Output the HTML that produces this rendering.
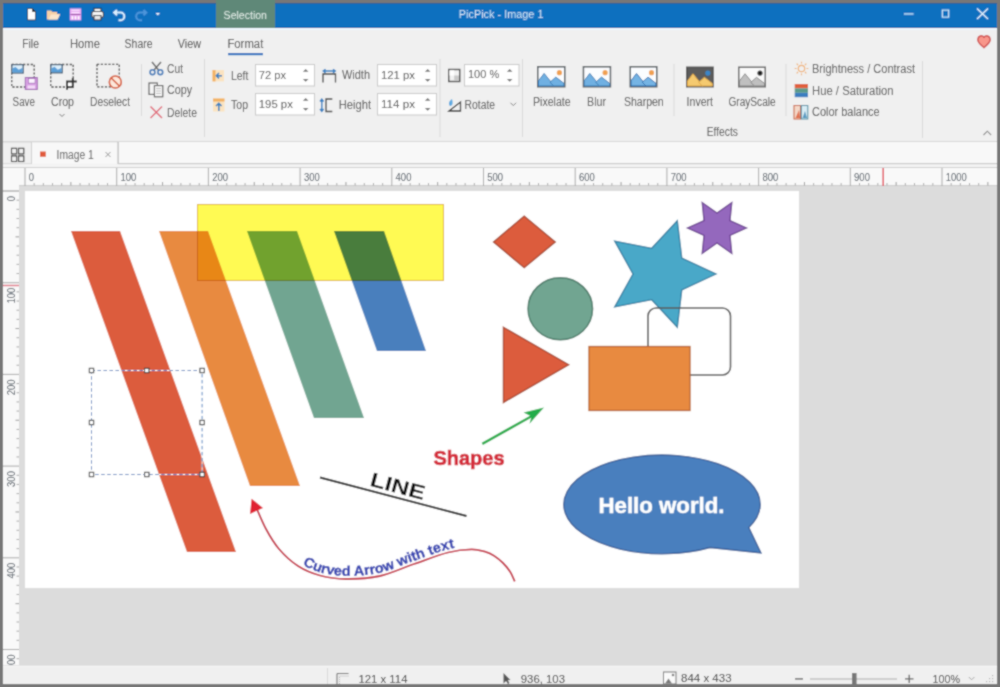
<!DOCTYPE html>
<html><head><meta charset="utf-8">
<style>
html,body{margin:0;padding:0;width:1000px;height:687px;overflow:hidden;background:#777;}
svg{display:block;font-family:"Liberation Sans",sans-serif;}
.ui{fill:#444;font-size:11px;}
</style></head><body><div id="wrap">
<svg width="1000" height="687" viewBox="0 0 1000 687">
<defs><filter id="soft" x="0" y="0" width="1000" height="687" filterUnits="userSpaceOnUse"><feConvolveMatrix order="3" kernelMatrix="1 2 1 2 8 2 1 2 1" divisor="20" edgeMode="duplicate" preserveAlpha="true"/></filter></defs>
<g filter="url(#soft)">
<!-- outer frame -->
<rect x="0" y="0" width="1000" height="687" fill="#777777"/>
<!-- title bar -->
<rect x="3" y="3" width="994" height="25" fill="#106fbf"/><rect x="3" y="3" width="994" height="0.8" fill="#2a5c92"/><rect x="3" y="27" width="994" height="1" fill="#165fa6"/>
<rect x="216" y="0" width="59" height="28" fill="#5e8878"/>
<!-- title icons -->
<g>
<path d="M27.5,8.5 H32.5 L35.5,11.5 V20 H27.5 Z" fill="#fdfdfd" stroke="#1a2a3a" stroke-width="0.8"/>
<path d="M32.5,8.5 V11.5 H35.5" fill="#333" stroke="#222" stroke-width="0.8"/>
<path d="M47,19.5 V10.5 H51 L52.5,12 H57 V14 H60 L57.5,19.5 Z" fill="#f6d0a6"/>
<path d="M48.5,19.5 L51,14.5 H60 L57.5,19.5 Z" fill="#fbe6cc"/>
<rect x="69.8" y="8.4" width="11.4" height="12" fill="#e9a6f2"/>
<rect x="71.5" y="9.6" width="8" height="1.2" fill="#fbe6ff"/>
<rect x="71.5" y="12" width="8" height="1.2" fill="#fbe6ff"/>
<rect x="70.5" y="14" width="10" height="0.9" fill="#8a4a92"/>
<rect x="71.6" y="16.2" width="1.6" height="3.2" fill="#fff"/>
<rect x="74.7" y="16.2" width="1.6" height="3.2" fill="#fff"/>
<rect x="77.8" y="16.2" width="1.6" height="3.2" fill="#fff"/>
<rect x="94" y="8.3" width="7" height="3.5" fill="#f4f4f4" stroke="#1d2530" stroke-width="0.9"/>
<rect x="91.8" y="11.5" width="11.6" height="6" rx="1.5" fill="#f4f4f4" stroke="#1d2530" stroke-width="1"/>
<rect x="94" y="15.5" width="7" height="4.5" fill="#e8e8e8" stroke="#1d2530" stroke-width="0.9"/>
<path d="M117,10 L114.2,12.6 L117,15.2 M114.5,12.6 H120.5 A3.8,3.8 0 0 1 120.5,20.2 H118.5" fill="none" stroke="#dcefff" stroke-width="2"/>
<path d="M143.5,10 L146.3,12.6 L143.5,15.2 M146,12.6 H140 A3.8,3.8 0 0 0 140,20.2 H142" fill="none" stroke="#4e95da" stroke-width="2"/>
<path d="M155.6,13 H160 L157.8,15.6 Z" fill="#e8f2fc"/>
<text x="223.6" y="19.2" font-size="11.5" fill="#e6f0ea" textLength="43.4" lengthAdjust="spacingAndGlyphs">Selection</text>
<text x="458.8" y="17.6" font-size="11.5" fill="#d6e8f8" textLength="84.7" lengthAdjust="spacingAndGlyphs">PicPick - Image 1</text>
<rect x="904" y="13.3" width="9.6" height="1.3" fill="#d8ecfc"/>
<rect x="942.3" y="10.1" width="6.4" height="7" fill="none" stroke="#d8ecfc" stroke-width="1.2"/>
<path d="M977,8.6 L988,19 M988,8.6 L977,19" stroke="#e4f1fd" stroke-width="1.4"/>
</g>
<!-- ribbon -->
<rect x="3" y="28" width="994" height="113" fill="#f0f0f0"/>
<rect x="3" y="28" width="994" height="2" fill="#eef6fe"/>
<rect x="3" y="141" width="994" height="1" fill="#dadada"/>
<!-- tab strip -->
<!-- ribbon text -->
<g fill="#444" font-size="12">
<text x="22.2" y="48.1" textLength="16.8" lengthAdjust="spacingAndGlyphs">File</text>
<text x="70" y="48.1" textLength="30" lengthAdjust="spacingAndGlyphs">Home</text>
<text x="124.6" y="48.1" textLength="28" lengthAdjust="spacingAndGlyphs">Share</text>
<text x="177.8" y="48.1" textLength="23.2" lengthAdjust="spacingAndGlyphs">View</text>
<text x="227.4" y="48.1" textLength="35.9" lengthAdjust="spacingAndGlyphs">Format</text>
</g>
<rect x="228" y="53" width="35" height="2.2" fill="#106fbf"/>
<g fill="#4c4c4c" font-size="12">
<text x="12.6" y="106" textLength="22.4" lengthAdjust="spacingAndGlyphs">Save</text>
<text x="51" y="106" textLength="23" lengthAdjust="spacingAndGlyphs">Crop</text>
<text x="90" y="106" textLength="40" lengthAdjust="spacingAndGlyphs">Deselect</text>
<text x="167" y="72.5" textLength="16" lengthAdjust="spacingAndGlyphs">Cut</text>
<text x="167" y="94.2" textLength="25" lengthAdjust="spacingAndGlyphs">Copy</text>
<text x="167" y="116.6" textLength="30" lengthAdjust="spacingAndGlyphs">Delete</text>
<text x="231" y="80" textLength="17.4" lengthAdjust="spacingAndGlyphs">Left</text>
<text x="231" y="108.9" textLength="17" lengthAdjust="spacingAndGlyphs">Top</text>
<text x="342" y="79.4" textLength="28" lengthAdjust="spacingAndGlyphs">Width</text>
<text x="338.7" y="108.5" textLength="32.3" lengthAdjust="spacingAndGlyphs">Height</text>
<text x="464.6" y="108.5" textLength="30.4" lengthAdjust="spacingAndGlyphs">Rotate</text>
<text x="533" y="106" textLength="37.7" lengthAdjust="spacingAndGlyphs">Pixelate</text>
<text x="587" y="106" textLength="19" lengthAdjust="spacingAndGlyphs">Blur</text>
<text x="624" y="106" textLength="39.7" lengthAdjust="spacingAndGlyphs">Sharpen</text>
<text x="686.6" y="106" textLength="26.4" lengthAdjust="spacingAndGlyphs">Invert</text>
<text x="728.4" y="106" textLength="47.3" lengthAdjust="spacingAndGlyphs">GrayScale</text>
<text x="706.8" y="136" textLength="31.1" lengthAdjust="spacingAndGlyphs">Effects</text>
<text x="812" y="73.3" textLength="103" lengthAdjust="spacingAndGlyphs">Brightness / Contrast</text>
<text x="812" y="95.3" textLength="81.6" lengthAdjust="spacingAndGlyphs">Hue / Saturation</text>
<text x="812" y="116.3" textLength="67.6" lengthAdjust="spacingAndGlyphs">Color balance</text>
</g>
<!-- inputs -->
<g fill="#fff" stroke="#c8c8c8" stroke-width="1">
<rect x="255.5" y="64.5" width="59" height="21.5"/>
<rect x="255.5" y="93.5" width="59" height="21.5"/>
<rect x="377.5" y="64.5" width="59" height="21.5"/>
<rect x="377.5" y="93.5" width="59" height="21.5"/>
<rect x="464.5" y="64.5" width="54.5" height="21.5"/>
</g>
<g fill="#4c4c4c" font-size="12">
<text x="258.8" y="79" font-size="11.5" textLength="27.2" lengthAdjust="spacingAndGlyphs">72 px</text>
<text x="258.8" y="108" font-size="11.5" textLength="34" lengthAdjust="spacingAndGlyphs">195 px</text>
<text x="381" y="79" font-size="11.5" textLength="34" lengthAdjust="spacingAndGlyphs">121 px</text>
<text x="381" y="108" font-size="11.5" textLength="34" lengthAdjust="spacingAndGlyphs">114 px</text>
<text x="468" y="78" font-size="11" textLength="31.2" lengthAdjust="spacingAndGlyphs">100 %</text>
</g>
<!-- ribbon icons -->
<g>
<rect x="11.7" y="64.5" width="22.5" height="22.5" fill="none" stroke="#3a3a3a" stroke-width="1.3" stroke-dasharray="2.2,1.6"/>
<rect x="11.799999999999999" y="64.6" width="11.4" height="8.4" fill="#dff0fc" stroke="#2b4a66" stroke-width="1.2"/><polygon points="12.399999999999999,72.39999999999999 12.399999999999999,68.32 15.61,66.88 18.759999999999998,69.76 22.599999999999998,67.84 22.599999999999998,72.39999999999999" fill="#5a9fd8"/>
<rect x="25.3" y="77.5" width="12" height="12" fill="#d9a2e4" stroke="#9a62ae" stroke-width="1"/>
<rect x="28.3" y="78.6" width="6.8" height="4.6" fill="#fcf4ff" stroke="#9a62ae" stroke-width="0.7"/>
<rect x="27.5" y="85.5" width="7.5" height="3" fill="#f4dcf8"/>
<rect x="50.7" y="64.5" width="22.5" height="22.5" fill="none" stroke="#3a3a3a" stroke-width="1.3" stroke-dasharray="2.2,1.6"/>
<rect x="50.800000000000004" y="64.6" width="11.4" height="8.200000000000001" fill="#dff0fc" stroke="#2b4a66" stroke-width="1.2"/><polygon points="51.400000000000006,72.2 51.400000000000006,68.23 54.61,66.82 57.760000000000005,69.64 61.6,67.76 61.6,72.2" fill="#5a9fd8"/>
<rect x="67" y="81.5" width="5.8" height="5.6" fill="#fff" stroke="#2a2a2a" stroke-width="2"/>
<path d="M72.8,78 V81.5 H76.8 M67,87.1 V89.8" fill="none" stroke="#2a2a2a" stroke-width="2"/>
<rect x="97" y="64.3" width="22.3" height="22.5" fill="none" stroke="#3a3a3a" stroke-width="1.3" stroke-dasharray="2.2,1.6"/>
<circle cx="115.3" cy="82" r="6" fill="#fde8dc" stroke="#d55a38" stroke-width="1.6"/>
<path d="M111.2,78 L119.4,86" stroke="#d55a38" stroke-width="1.6"/>
<path d="M152,62 L158.5,70 M161,62 L154,70" stroke="#6a6a6a" stroke-width="1.6"/>
<circle cx="152.5" cy="72.2" r="2.4" fill="none" stroke="#3d78b8" stroke-width="1.6"/>
<circle cx="160.3" cy="72.2" r="2.4" fill="none" stroke="#3d78b8" stroke-width="1.6"/>
<rect x="149" y="83" width="8.3" height="11.4" fill="#f6f6f6" stroke="#555" stroke-width="1.1"/>
<rect x="154.4" y="85.6" width="8.4" height="11.2" fill="#f6f6f6" stroke="#555" stroke-width="1.1"/>
<path d="M156,88.5 H161 M156,91 H161 M156,93.5 H161" stroke="#aaa" stroke-width="0.7"/>
<path d="M150.5,106.5 L162,118 M162,106.5 L150.5,118" stroke="#e06a78" stroke-width="1.5"/>
<rect x="212.5" y="70" width="11.5" height="11.4" fill="#fbe3c0"/>
<rect x="212.5" y="70" width="3" height="11.4" fill="#f2b060"/>
<path d="M222,75.7 H216.5 M219,73 L216.3,75.7 L219,78.4" fill="none" stroke="#2d7cc0" stroke-width="1.5"/>
<rect x="213" y="98.5" width="11.5" height="13" fill="#fbe3c0"/>
<rect x="213" y="98.5" width="11.5" height="3" fill="#f2b060"/>
<path d="M218.8,111 V103.5 M216,106 L218.8,103.2 L221.6,106" fill="none" stroke="#2d7cc0" stroke-width="1.5"/>
<path d="M323,82.5 V74 H335.5 V82.5" fill="none" stroke="#404040" stroke-width="1.3"/>
<path d="M323.5,71 H335 M325.5,69.2 L323.2,71 L325.5,72.8 M333,69.2 L335.3,71 L333,72.8" fill="none" stroke="#2d7cc0" stroke-width="1.4"/>
<path d="M332.3,99 H326 V111.5 H332.3" fill="none" stroke="#404040" stroke-width="1.3"/>
<path d="M321.8,99.5 V111 M320,101.5 L321.8,99.2 L323.6,101.5 M320,109 L321.8,111.3 L323.6,109" fill="none" stroke="#2d7cc0" stroke-width="1.4"/>
<rect x="448.7" y="69.5" width="11" height="12" fill="#f2f2f2" stroke="#404040" stroke-width="1.4"/>
<rect x="449.5" y="70.3" width="4.7" height="5.2" fill="#ffffff"/>
<rect x="454.2" y="75.5" width="4.7" height="5.3" fill="#c8c8c8"/>
<path d="M449,111 L460.5,102 V111 Z" fill="none" stroke="#333" stroke-width="1.3"/>
<path d="M452,99 C449,101 448,104 450,106 C452,106 453.5,104 452,99 Z" fill="#5aa8e0"/>
<path d="M510.5,102.8 L513.3,105.6 L516.1,102.8" fill="none" stroke="#777" stroke-width="1"/>
<path d="M59.5,114 L62,116.5 L64.5,114" fill="none" stroke="#777" stroke-width="1"/>
<rect x="537.75" y="66.75" width="27.0" height="20.0" fill="#fbfdff" stroke="#555c60" stroke-width="1.5"/><polygon points="538.5,86.0 538.5,80.82 544.11,73.42 554.31,86.0 " fill="#6fb0e2" stroke="#3d7fb8" stroke-width="1"/><polygon points="549.975,82.3 555.84,77.12 564.0,83.41 564.0,86.0 553.8,86.0" fill="#6fb0e2" stroke="#3d7fb8" stroke-width="1"/><circle cx="559.41" cy="72.68" r="2.6" fill="#f0a050"/><rect x="583.45" y="66.75" width="27.0" height="20.0" fill="#fbfdff" stroke="#555c60" stroke-width="1.5"/><polygon points="584.2,86.0 584.2,80.82 589.8100000000001,73.42 600.01,86.0 " fill="#6fb0e2" stroke="#3d7fb8" stroke-width="1"/><polygon points="595.6750000000001,82.3 601.5400000000001,77.12 609.7,83.41 609.7,86.0 599.5,86.0" fill="#6fb0e2" stroke="#3d7fb8" stroke-width="1"/><circle cx="605.11" cy="72.68" r="2.6" fill="#f0a050"/><rect x="630.25" y="66.75" width="26.5" height="20.0" fill="#fbfdff" stroke="#555c60" stroke-width="1.5"/><polygon points="631.0,86.0 631.0,80.82 636.5,73.42 646.5,86.0 " fill="#74b4e4" stroke="#2f6fb0" stroke-width="1"/><polygon points="642.25,82.3 648.0,77.12 656.0,83.41 656.0,86.0 646.0,86.0" fill="#74b4e4" stroke="#2f6fb0" stroke-width="1"/><circle cx="651.5" cy="72.68" r="2.6" fill="#f0a050"/><rect x="686.75" y="67.25" width="26.3" height="19.5" fill="#5c5c5c" stroke="#505050" stroke-width="1.5"/><polygon points="687.5,86.0 687.5,80.96 692.956,73.76 702.876,86.0 " fill="#f5ca70" stroke="#e0a848" stroke-width="1"/><polygon points="698.66,82.4 704.364,77.36 712.3,83.48 712.3,86.0 702.38,86.0" fill="#f5ca70" stroke="#e0a848" stroke-width="1"/><circle cx="707.836" cy="73.04" r="2.6" fill="#3a86c8"/><rect x="738.75" y="67.25" width="26.5" height="19.5" fill="#fafafa" stroke="#666" stroke-width="1.5"/><polygon points="739.5,86.0 739.5,80.96 745.0,73.76 755.0,86.0 " fill="#c0c0c0" stroke="#888" stroke-width="1"/><polygon points="750.75,82.4 756.5,77.36 764.5,83.48 764.5,86.0 754.5,86.0" fill="#c0c0c0" stroke="#888" stroke-width="1"/><circle cx="760.0" cy="73.04" r="2.6" fill="#222"/>
<circle cx="801.5" cy="68.5" r="3.2" fill="none" stroke="#f0b070" stroke-width="1.2"/>
<path d="M801.5,61.7 V63.5 M801.5,73.5 V75.3 M794.7,68.5 H796.5 M806.5,68.5 H808.3 M796.7,63.7 L798,65 M805,72 L806.3,73.3 M796.7,73.3 L798,72 M805,65 L806.3,63.7" stroke="#f0b070" stroke-width="1.1"/>
<rect x="794.7" y="84" width="13.3" height="4.4" fill="#e0603c"/>
<rect x="794.7" y="88.4" width="13.3" height="4.4" fill="#5a9a8a"/>
<rect x="794.7" y="92.8" width="13.3" height="4.4" fill="#3a7ec0"/>
<rect x="794" y="105.5" width="6.5" height="13.5" fill="#f4d8c8" stroke="#c86040" stroke-width="1"/>
<rect x="801.3" y="105.5" width="6.5" height="13.5" fill="#d8ecf4" stroke="#4a8aa0" stroke-width="1"/>
<path d="M795.5,118 L799,110 L800,118 Z" fill="#e07050"/>
<path d="M802.5,118 L805,111 L807,118 Z" fill="#5a9ac0"/>
<path d="M983.5,135 L987.3,131.2 L991.1,135" fill="none" stroke="#888" stroke-width="1.1"/>
<path d="M984,37.2 C982,35 978.2,35.5 977.8,39.3 C977.5,42.5 980.8,45 984,47.6 C987.2,45 990.5,42.5 990.2,39.3 C989.8,35.5 986,35 984,37.2 Z" fill="#f8968a" stroke="#cf4e4e" stroke-width="1.5"/>
</g>
<!-- separators -->
<g fill="#d8d8d8">
<rect x="141" y="64" width="1" height="52"/>
<rect x="204" y="59" width="1" height="78"/>
<rect x="439.5" y="59" width="1" height="78"/>
<rect x="522" y="59" width="1" height="78"/>
<rect x="673.5" y="64" width="1" height="52"/>
<rect x="785.5" y="64" width="1" height="52"/>
<rect x="922" y="61" width="1" height="77"/>
</g>
<!-- spinners -->
<g fill="#707070">
<path d="M302.9,71.7 L305.7,68.9 L308.5,71.7 Z M302.9,78.9 L305.7,81.7 L308.5,78.9 Z"/>
<path d="M302.9,100.7 L305.7,97.9 L308.5,100.7 Z M302.9,107.9 L305.7,110.7 L308.5,107.9 Z"/>
<path d="M424.9,71.7 L427.7,68.9 L430.5,71.7 Z M424.9,78.9 L427.7,81.7 L430.5,78.9 Z"/>
<path d="M424.9,100.7 L427.7,97.9 L430.5,100.7 Z M424.9,107.9 L427.7,110.7 L430.5,107.9 Z"/>
<path d="M506.9,71.7 L509.7,68.9 L512.5,71.7 Z M506.9,78.9 L509.7,81.7 L512.5,78.9 Z"/>
</g>
<!-- tabstrip -->
<rect x="3" y="142" width="994" height="26" fill="#f0f0f0"/>
<!-- rulers -->
<rect x="3" y="168" width="994" height="18" fill="#f9f9f9"/>
<rect x="3" y="185" width="16" height="480" fill="#f9f9f9"/>
<!-- tab strip content -->
<rect x="3" y="142" width="994" height="26" fill="#f0f0f0"/>
<rect x="3" y="141.5" width="994" height="1" fill="#d4d4d4"/>
<rect x="118" y="142" width="879" height="22" fill="#f8f8f8"/>
<rect x="31.5" y="142.5" width="86.5" height="21.5" fill="#f8f8f8"/>
<rect x="31" y="142" width="1" height="22" fill="#d0d0d0"/>
<rect x="117.5" y="142" width="1.2" height="22" fill="#b8b8b8"/>
<rect x="118" y="163.2" width="879" height="1.2" fill="#c0c0c0"/>
<rect x="3" y="163.2" width="28" height="1" fill="#d8d8d8"/>
<rect x="3" y="164.4" width="994" height="3.2" fill="#f4f4f4"/>
<rect x="3" y="167.2" width="994" height="1" fill="#c8c8c8"/>
<g fill="none" stroke="#333" stroke-width="1.1">
<rect x="11.5" y="148.3" width="5.2" height="5.6"/><rect x="18.6" y="148.3" width="5.2" height="5.6"/>
<rect x="11.5" y="155.9" width="5.2" height="5.6"/><rect x="18.6" y="155.9" width="5.2" height="5.6"/>
</g>
<rect x="40" y="151.5" width="5.8" height="5.3" fill="#e05a3a"/>
<text x="56.6" y="159.2" font-size="12" fill="#555" textLength="37.2" lengthAdjust="spacingAndGlyphs">Image 1</text>
<path d="M105.5,152 L110.5,157 M110.5,152 L105.5,157" stroke="#888" stroke-width="0.9"/>
<!-- rulers -->
<rect x="3" y="168" width="994" height="17" fill="#f9f9f9"/>
<rect x="3" y="185" width="994" height="1.6" fill="#cdcdcd"/>
<rect x="3" y="186" width="16" height="479" fill="#f9f9f9"/>
<rect x="19" y="186" width="1" height="479" fill="#d0d0d0"/>
<rect x="3" y="190.5" width="16" height="1" fill="#c8c8c8"/>
<rect x="24.50" y="168" width="1" height="18" fill="#a8a8a8"/><rect x="33.67" y="183" width="1" height="2.5" fill="#a8a8a8"/><rect x="42.84" y="183" width="1" height="2.5" fill="#a8a8a8"/><rect x="52.01" y="183" width="1" height="2.5" fill="#a8a8a8"/><rect x="61.18" y="183" width="1" height="2.5" fill="#a8a8a8"/><rect x="70.35" y="182" width="1" height="3.5" fill="#999"/><rect x="79.52" y="183" width="1" height="2.5" fill="#a8a8a8"/><rect x="88.69" y="183" width="1" height="2.5" fill="#a8a8a8"/><rect x="97.86" y="183" width="1" height="2.5" fill="#a8a8a8"/><rect x="107.03" y="183" width="1" height="2.5" fill="#a8a8a8"/><rect x="116.20" y="168" width="1" height="18" fill="#a8a8a8"/><rect x="125.37" y="183" width="1" height="2.5" fill="#a8a8a8"/><rect x="134.54" y="183" width="1" height="2.5" fill="#a8a8a8"/><rect x="143.71" y="183" width="1" height="2.5" fill="#a8a8a8"/><rect x="152.88" y="183" width="1" height="2.5" fill="#a8a8a8"/><rect x="162.05" y="182" width="1" height="3.5" fill="#999"/><rect x="171.22" y="183" width="1" height="2.5" fill="#a8a8a8"/><rect x="180.39" y="183" width="1" height="2.5" fill="#a8a8a8"/><rect x="189.56" y="183" width="1" height="2.5" fill="#a8a8a8"/><rect x="198.73" y="183" width="1" height="2.5" fill="#a8a8a8"/><rect x="207.90" y="168" width="1" height="18" fill="#a8a8a8"/><rect x="217.07" y="183" width="1" height="2.5" fill="#a8a8a8"/><rect x="226.24" y="183" width="1" height="2.5" fill="#a8a8a8"/><rect x="235.41" y="183" width="1" height="2.5" fill="#a8a8a8"/><rect x="244.58" y="183" width="1" height="2.5" fill="#a8a8a8"/><rect x="253.75" y="182" width="1" height="3.5" fill="#999"/><rect x="262.92" y="183" width="1" height="2.5" fill="#a8a8a8"/><rect x="272.09" y="183" width="1" height="2.5" fill="#a8a8a8"/><rect x="281.26" y="183" width="1" height="2.5" fill="#a8a8a8"/><rect x="290.43" y="183" width="1" height="2.5" fill="#a8a8a8"/><rect x="299.60" y="168" width="1" height="18" fill="#a8a8a8"/><rect x="308.77" y="183" width="1" height="2.5" fill="#a8a8a8"/><rect x="317.94" y="183" width="1" height="2.5" fill="#a8a8a8"/><rect x="327.11" y="183" width="1" height="2.5" fill="#a8a8a8"/><rect x="336.28" y="183" width="1" height="2.5" fill="#a8a8a8"/><rect x="345.45" y="182" width="1" height="3.5" fill="#999"/><rect x="354.62" y="183" width="1" height="2.5" fill="#a8a8a8"/><rect x="363.79" y="183" width="1" height="2.5" fill="#a8a8a8"/><rect x="372.96" y="183" width="1" height="2.5" fill="#a8a8a8"/><rect x="382.13" y="183" width="1" height="2.5" fill="#a8a8a8"/><rect x="391.30" y="168" width="1" height="18" fill="#a8a8a8"/><rect x="400.47" y="183" width="1" height="2.5" fill="#a8a8a8"/><rect x="409.64" y="183" width="1" height="2.5" fill="#a8a8a8"/><rect x="418.81" y="183" width="1" height="2.5" fill="#a8a8a8"/><rect x="427.98" y="183" width="1" height="2.5" fill="#a8a8a8"/><rect x="437.15" y="182" width="1" height="3.5" fill="#999"/><rect x="446.32" y="183" width="1" height="2.5" fill="#a8a8a8"/><rect x="455.49" y="183" width="1" height="2.5" fill="#a8a8a8"/><rect x="464.66" y="183" width="1" height="2.5" fill="#a8a8a8"/><rect x="473.83" y="183" width="1" height="2.5" fill="#a8a8a8"/><rect x="483.00" y="168" width="1" height="18" fill="#a8a8a8"/><rect x="492.17" y="183" width="1" height="2.5" fill="#a8a8a8"/><rect x="501.34" y="183" width="1" height="2.5" fill="#a8a8a8"/><rect x="510.51" y="183" width="1" height="2.5" fill="#a8a8a8"/><rect x="519.68" y="183" width="1" height="2.5" fill="#a8a8a8"/><rect x="528.85" y="182" width="1" height="3.5" fill="#999"/><rect x="538.02" y="183" width="1" height="2.5" fill="#a8a8a8"/><rect x="547.19" y="183" width="1" height="2.5" fill="#a8a8a8"/><rect x="556.36" y="183" width="1" height="2.5" fill="#a8a8a8"/><rect x="565.53" y="183" width="1" height="2.5" fill="#a8a8a8"/><rect x="574.70" y="168" width="1" height="18" fill="#a8a8a8"/><rect x="583.87" y="183" width="1" height="2.5" fill="#a8a8a8"/><rect x="593.04" y="183" width="1" height="2.5" fill="#a8a8a8"/><rect x="602.21" y="183" width="1" height="2.5" fill="#a8a8a8"/><rect x="611.38" y="183" width="1" height="2.5" fill="#a8a8a8"/><rect x="620.55" y="182" width="1" height="3.5" fill="#999"/><rect x="629.72" y="183" width="1" height="2.5" fill="#a8a8a8"/><rect x="638.89" y="183" width="1" height="2.5" fill="#a8a8a8"/><rect x="648.06" y="183" width="1" height="2.5" fill="#a8a8a8"/><rect x="657.23" y="183" width="1" height="2.5" fill="#a8a8a8"/><rect x="666.40" y="168" width="1" height="18" fill="#a8a8a8"/><rect x="675.57" y="183" width="1" height="2.5" fill="#a8a8a8"/><rect x="684.74" y="183" width="1" height="2.5" fill="#a8a8a8"/><rect x="693.91" y="183" width="1" height="2.5" fill="#a8a8a8"/><rect x="703.08" y="183" width="1" height="2.5" fill="#a8a8a8"/><rect x="712.25" y="182" width="1" height="3.5" fill="#999"/><rect x="721.42" y="183" width="1" height="2.5" fill="#a8a8a8"/><rect x="730.59" y="183" width="1" height="2.5" fill="#a8a8a8"/><rect x="739.76" y="183" width="1" height="2.5" fill="#a8a8a8"/><rect x="748.93" y="183" width="1" height="2.5" fill="#a8a8a8"/><rect x="758.10" y="168" width="1" height="18" fill="#a8a8a8"/><rect x="767.27" y="183" width="1" height="2.5" fill="#a8a8a8"/><rect x="776.44" y="183" width="1" height="2.5" fill="#a8a8a8"/><rect x="785.61" y="183" width="1" height="2.5" fill="#a8a8a8"/><rect x="794.78" y="183" width="1" height="2.5" fill="#a8a8a8"/><rect x="803.95" y="182" width="1" height="3.5" fill="#999"/><rect x="813.12" y="183" width="1" height="2.5" fill="#a8a8a8"/><rect x="822.29" y="183" width="1" height="2.5" fill="#a8a8a8"/><rect x="831.46" y="183" width="1" height="2.5" fill="#a8a8a8"/><rect x="840.63" y="183" width="1" height="2.5" fill="#a8a8a8"/><rect x="849.80" y="168" width="1" height="18" fill="#a8a8a8"/><rect x="858.97" y="183" width="1" height="2.5" fill="#a8a8a8"/><rect x="868.14" y="183" width="1" height="2.5" fill="#a8a8a8"/><rect x="877.31" y="183" width="1" height="2.5" fill="#a8a8a8"/><rect x="886.48" y="183" width="1" height="2.5" fill="#a8a8a8"/><rect x="895.65" y="182" width="1" height="3.5" fill="#999"/><rect x="904.82" y="183" width="1" height="2.5" fill="#a8a8a8"/><rect x="913.99" y="183" width="1" height="2.5" fill="#a8a8a8"/><rect x="923.16" y="183" width="1" height="2.5" fill="#a8a8a8"/><rect x="932.33" y="183" width="1" height="2.5" fill="#a8a8a8"/><rect x="941.50" y="168" width="1" height="18" fill="#a8a8a8"/><rect x="950.67" y="183" width="1" height="2.5" fill="#a8a8a8"/><rect x="959.84" y="183" width="1" height="2.5" fill="#a8a8a8"/><rect x="969.01" y="183" width="1" height="2.5" fill="#a8a8a8"/><rect x="978.18" y="183" width="1" height="2.5" fill="#a8a8a8"/><rect x="987.35" y="182" width="1" height="3.5" fill="#999"/><g font-size="10.5" fill="#46505a"><text x="28.80" y="180.8" textLength="5.27" lengthAdjust="spacingAndGlyphs">0</text><text x="120.50" y="180.8" textLength="15.81" lengthAdjust="spacingAndGlyphs">100</text><text x="212.20" y="180.8" textLength="15.81" lengthAdjust="spacingAndGlyphs">200</text><text x="303.90" y="180.8" textLength="15.81" lengthAdjust="spacingAndGlyphs">300</text><text x="395.60" y="180.8" textLength="15.81" lengthAdjust="spacingAndGlyphs">400</text><text x="487.30" y="180.8" textLength="15.81" lengthAdjust="spacingAndGlyphs">500</text><text x="579.00" y="180.8" textLength="15.81" lengthAdjust="spacingAndGlyphs">600</text><text x="670.70" y="180.8" textLength="15.81" lengthAdjust="spacingAndGlyphs">700</text><text x="762.40" y="180.8" textLength="15.81" lengthAdjust="spacingAndGlyphs">800</text><text x="854.10" y="180.8" textLength="15.81" lengthAdjust="spacingAndGlyphs">900</text><text x="945.80" y="180.8" textLength="21.08" lengthAdjust="spacingAndGlyphs">1000</text></g><rect x="3" y="190.50" width="16" height="1" fill="#a8a8a8"/><rect x="16.5" y="199.67" width="2.5" height="1" fill="#a8a8a8"/><rect x="16.5" y="208.84" width="2.5" height="1" fill="#a8a8a8"/><rect x="16.5" y="218.01" width="2.5" height="1" fill="#a8a8a8"/><rect x="16.5" y="227.18" width="2.5" height="1" fill="#a8a8a8"/><rect x="15.5" y="236.35" width="3.5" height="1" fill="#999"/><rect x="16.5" y="245.52" width="2.5" height="1" fill="#a8a8a8"/><rect x="16.5" y="254.69" width="2.5" height="1" fill="#a8a8a8"/><rect x="16.5" y="263.86" width="2.5" height="1" fill="#a8a8a8"/><rect x="16.5" y="273.03" width="2.5" height="1" fill="#a8a8a8"/><rect x="3" y="282.20" width="16" height="1" fill="#a8a8a8"/><rect x="16.5" y="291.37" width="2.5" height="1" fill="#a8a8a8"/><rect x="16.5" y="300.54" width="2.5" height="1" fill="#a8a8a8"/><rect x="16.5" y="309.71" width="2.5" height="1" fill="#a8a8a8"/><rect x="16.5" y="318.88" width="2.5" height="1" fill="#a8a8a8"/><rect x="15.5" y="328.05" width="3.5" height="1" fill="#999"/><rect x="16.5" y="337.22" width="2.5" height="1" fill="#a8a8a8"/><rect x="16.5" y="346.39" width="2.5" height="1" fill="#a8a8a8"/><rect x="16.5" y="355.56" width="2.5" height="1" fill="#a8a8a8"/><rect x="16.5" y="364.73" width="2.5" height="1" fill="#a8a8a8"/><rect x="3" y="373.90" width="16" height="1" fill="#a8a8a8"/><rect x="16.5" y="383.07" width="2.5" height="1" fill="#a8a8a8"/><rect x="16.5" y="392.24" width="2.5" height="1" fill="#a8a8a8"/><rect x="16.5" y="401.41" width="2.5" height="1" fill="#a8a8a8"/><rect x="16.5" y="410.58" width="2.5" height="1" fill="#a8a8a8"/><rect x="15.5" y="419.75" width="3.5" height="1" fill="#999"/><rect x="16.5" y="428.92" width="2.5" height="1" fill="#a8a8a8"/><rect x="16.5" y="438.09" width="2.5" height="1" fill="#a8a8a8"/><rect x="16.5" y="447.26" width="2.5" height="1" fill="#a8a8a8"/><rect x="16.5" y="456.43" width="2.5" height="1" fill="#a8a8a8"/><rect x="3" y="465.60" width="16" height="1" fill="#a8a8a8"/><rect x="16.5" y="474.77" width="2.5" height="1" fill="#a8a8a8"/><rect x="16.5" y="483.94" width="2.5" height="1" fill="#a8a8a8"/><rect x="16.5" y="493.11" width="2.5" height="1" fill="#a8a8a8"/><rect x="16.5" y="502.28" width="2.5" height="1" fill="#a8a8a8"/><rect x="15.5" y="511.45" width="3.5" height="1" fill="#999"/><rect x="16.5" y="520.62" width="2.5" height="1" fill="#a8a8a8"/><rect x="16.5" y="529.79" width="2.5" height="1" fill="#a8a8a8"/><rect x="16.5" y="538.96" width="2.5" height="1" fill="#a8a8a8"/><rect x="16.5" y="548.13" width="2.5" height="1" fill="#a8a8a8"/><rect x="3" y="557.30" width="16" height="1" fill="#a8a8a8"/><rect x="16.5" y="566.47" width="2.5" height="1" fill="#a8a8a8"/><rect x="16.5" y="575.64" width="2.5" height="1" fill="#a8a8a8"/><rect x="16.5" y="584.81" width="2.5" height="1" fill="#a8a8a8"/><rect x="16.5" y="593.98" width="2.5" height="1" fill="#a8a8a8"/><rect x="15.5" y="603.15" width="3.5" height="1" fill="#999"/><rect x="16.5" y="612.32" width="2.5" height="1" fill="#a8a8a8"/><rect x="16.5" y="621.49" width="2.5" height="1" fill="#a8a8a8"/><rect x="16.5" y="630.66" width="2.5" height="1" fill="#a8a8a8"/><rect x="16.5" y="639.83" width="2.5" height="1" fill="#a8a8a8"/><rect x="3" y="649.00" width="16" height="1" fill="#a8a8a8"/><rect x="16.5" y="658.17" width="2.5" height="1" fill="#a8a8a8"/><g font-size="10.5" fill="#46505a"><text transform="translate(15.3,196.00) rotate(-90)" text-anchor="end" x="0" y="0" textLength="5.27" lengthAdjust="spacingAndGlyphs">0</text><text transform="translate(15.3,287.70) rotate(-90)" text-anchor="end" x="0" y="0" textLength="15.81" lengthAdjust="spacingAndGlyphs">100</text><text transform="translate(15.3,379.40) rotate(-90)" text-anchor="end" x="0" y="0" textLength="15.81" lengthAdjust="spacingAndGlyphs">200</text><text transform="translate(15.3,471.10) rotate(-90)" text-anchor="end" x="0" y="0" textLength="15.81" lengthAdjust="spacingAndGlyphs">300</text><text transform="translate(15.3,562.80) rotate(-90)" text-anchor="end" x="0" y="0" textLength="15.81" lengthAdjust="spacingAndGlyphs">400</text><text transform="translate(15.3,654.50) rotate(-90)" text-anchor="end" x="0" y="0" textLength="15.81" lengthAdjust="spacingAndGlyphs">500</text></g><rect x="882.5" y="168" width="1.4" height="18" fill="#e04050"/><rect x="3" y="284.8" width="16" height="1.4" fill="#e07080"/><rect x="3" y="168" width="16" height="18" fill="#f9f9f9"/>
<!-- canvas -->
<rect x="19" y="186" width="978" height="479" fill="#dcdcdc"/>
<rect x="25" y="191" width="774" height="397" fill="#ffffff"/>
<!-- canvas content -->
<g id="content">
<polygon points="71,231 120,231 236,552 187,552" fill="#dc5c3c"/>
<polygon points="159,231 208,231 300,486 250,486" fill="#e88a40"/>
<polygon points="247,231 297,231 364,418 314,418" fill="#71a591"/>
<polygon points="334,231 384,231 426,351 377,351" fill="#4a7fbd"/>
<rect x="197.5" y="204.5" width="246" height="76" fill="#fffa52" stroke="#e0b428" stroke-width="1" style="mix-blend-mode:multiply"/>
<polygon points="493.5,242 524.2,216 555.3,242 524.2,267.7" fill="#dc5c3c" stroke="#a84428" stroke-width="1.3"/>
<ellipse cx="560.3" cy="308.8" rx="32.3" ry="31" fill="#71a591" stroke="#4a7a68" stroke-width="1.4"/>
<polygon points="503.4,327.2 568.7,364.7 503.4,402.5" fill="#dc5c3c" stroke="#a84428" stroke-width="1.3"/>
<polygon points="716.0,274.0 681.8,289.9 677.3,327.3 651.7,299.7 614.7,306.9 633.0,274.0 614.7,241.1 651.7,248.3 677.3,220.7 681.8,258.1" fill="#4aa8c8" stroke="#2e7ea2" stroke-width="1.3"/>
<polygon points="746.5,228.0 730.0,235.5 731.8,253.5 717.0,243.0 702.2,253.5 704.0,235.5 687.5,228.0 704.0,220.5 702.2,202.5 717.0,213.0 731.8,202.5 730.0,220.5" fill="#9467bd" stroke="#6a3f90" stroke-width="1.3"/>
<rect x="648" y="308" width="82.5" height="67" rx="8" ry="8" fill="none" stroke="#5a5a5a" stroke-width="1.6"/>
<rect x="589" y="346.5" width="101" height="64" fill="#e88a40" stroke="#b86228" stroke-width="1.3"/>
<path d="M 748.8,527.5 A 98.2,49.4 0 1 0 710,547.5 L 761,553 Z" fill="#4a7fbe" stroke="#385e98" stroke-width="1.3"/>
<text x="598.5" y="512.5" font-size="22" font-weight="bold" fill="#ffffff" stroke="#ffffff" stroke-width="0.4" textLength="126" lengthAdjust="spacingAndGlyphs">Hello world.</text>
<line x1="320" y1="477.5" x2="466.5" y2="516" stroke="#1a1a1a" stroke-width="1.9"/>
<text x="0" y="0" font-size="20" font-weight="bold" fill="#111" transform="translate(369,485.5) rotate(15)" textLength="56" lengthAdjust="spacingAndGlyphs">LINE</text>
<text x="433.5" y="464.6" font-size="21" font-weight="bold" fill="#d42c3a" stroke="#d42c3a" stroke-width="0.7" textLength="71" lengthAdjust="spacingAndGlyphs">Shapes</text>
<line x1="482.3" y1="443.8" x2="532" y2="416" stroke="#20ac48" stroke-width="2.5"/>
<polygon points="544,407.6 523.6,412.6 531.5,416.5 529.5,423.8" fill="#20ac48"/>
<path id="curve" d="M 256,507 C 257.7,510.7 262.2,522.0 266,529 C 269.8,536.0 273.7,542.8 279,549 C 284.3,555.2 291.2,561.6 298,566 C 304.8,570.4 312.0,573.3 320,575.5 C 328.0,577.7 336.0,578.9 346,579 C 356.0,579.1 368.7,578.5 380,576 C 391.3,573.5 402.7,567.9 414,564 C 425.3,560.1 438.4,554.9 448,552.5 C 457.6,550.1 465.3,549.5 471.5,549.4 C 477.7,549.3 481.2,550.7 485,551.7 C 488.8,552.8 491.0,553.8 494,555.7 C 497.0,557.6 500.3,560.3 503,563 C 505.7,565.7 508.3,568.9 510.3,572 C 512.3,575.1 514.0,579.8 514.8,581.4" fill="none" stroke="#c42a40" stroke-width="1.8"/>
<polygon points="251.6,498.7 250,514 263,508" fill="#e02030"/>
<path id="tp" d="M 298,562.8 C 301.7,564.4 312.0,570.1 320,572.3 C 328.0,574.5 336.0,575.7 346,575.8 C 356.0,575.9 368.7,575.3 380,572.8 C 391.3,570.3 402.7,564.7 414,560.8 C 425.3,556.9 438.4,551.7 448,549.3 C 457.6,546.9 465.3,546.3 471.5,546.1999999999999 C 477.7,546.1 482.8,548.1 485,548.5" fill="none"/>
<text font-size="14" font-weight="bold" fill="#3442b0" stroke="#3442b0" stroke-width="0.35"><textPath href="#tp" startOffset="5" textLength="158" lengthAdjust="spacingAndGlyphs">Curved Arrow with text</textPath></text>
<!-- selection -->
<rect x="91.5" y="370.5" width="110.6" height="104" fill="none" stroke="#ffffff" stroke-width="1"/>
<rect x="91.5" y="370.5" width="110.6" height="104" fill="none" stroke="#5a86c0" stroke-width="1" stroke-dasharray="3.5,2.5"/>
<g fill="#fff" stroke="#333" stroke-width="1"><rect x="89.3" y="368.3" width="4.4" height="4.4"/><rect x="89.3" y="420.3" width="4.4" height="4.4"/><rect x="89.3" y="472.3" width="4.4" height="4.4"/><rect x="144.60000000000002" y="368.3" width="4.4" height="4.4"/><rect x="144.60000000000002" y="472.3" width="4.4" height="4.4"/><rect x="199.9" y="368.3" width="4.4" height="4.4"/><rect x="199.9" y="420.3" width="4.4" height="4.4"/><rect x="199.9" y="472.3" width="4.4" height="4.4"/></g>
</g>
<!-- status bar -->
<rect x="3" y="665" width="994" height="19" fill="#f0f0f0"/>
<rect x="3" y="665" width="994" height="1.2" fill="#e4e4e4"/>
<rect x="3" y="666.2" width="994" height="0.8" fill="#f8f8f8"/>
<rect x="327" y="668" width="1" height="16" fill="#d8d8d8"/>
<path d="M337,684 V673.5 H348.5" fill="none" stroke="#666" stroke-width="1"/>
<path d="M339.5,684 V676 H348.5" fill="none" stroke="#999" stroke-width="0.8" stroke-dasharray="1,1"/>
<path d="M503.5,673 V683.5 L506,681 L508,684 L509.5,683 L507.8,680.3 L510.5,680 Z" fill="#555"/>
<rect x="663.5" y="672" width="12.5" height="12" fill="#fafafa" stroke="#777" stroke-width="1"/>
<path d="M665,683.5 L668.5,678.5 L672,683.5 Z" fill="#777"/>
<circle cx="673" cy="675" r="1.3" fill="#777"/>
<g fill="#383838" font-size="11">
<text x="358.4" y="682.6" textLength="49.1" lengthAdjust="spacingAndGlyphs">121 x 114</text>
<text x="520.8" y="682.6" textLength="44.2" lengthAdjust="spacingAndGlyphs">936, 103</text>
<text x="681" y="682.4" textLength="50.6" lengthAdjust="spacingAndGlyphs">844 x 433</text>
<text x="932.6" y="682.6" textLength="27.6" lengthAdjust="spacingAndGlyphs">100%</text>
</g>
<rect x="795" y="678.2" width="8" height="1.4" fill="#666"/>
<rect x="810" y="678.5" width="87" height="1" fill="#aaa"/>
<rect x="852" y="673" width="4.6" height="11" fill="#777"/>
<path d="M905,678.9 H913.5 M909.25,674.7 V683.1" stroke="#666" stroke-width="1.4"/>
<path d="M968.8,677 L971.6,679.8 L974.4,677" fill="none" stroke="#999" stroke-width="0.9"/>
<g fill="#b0b0b0">
<rect x="992" y="675" width="1.2" height="1.2"/><rect x="989" y="678" width="1.2" height="1.2"/><rect x="992" y="678" width="1.2" height="1.2"/>
<rect x="986" y="681" width="1.2" height="1.2"/><rect x="989" y="681" width="1.2" height="1.2"/><rect x="992" y="681" width="1.2" height="1.2"/>
</g>
</g></svg></div>
</body></html>
